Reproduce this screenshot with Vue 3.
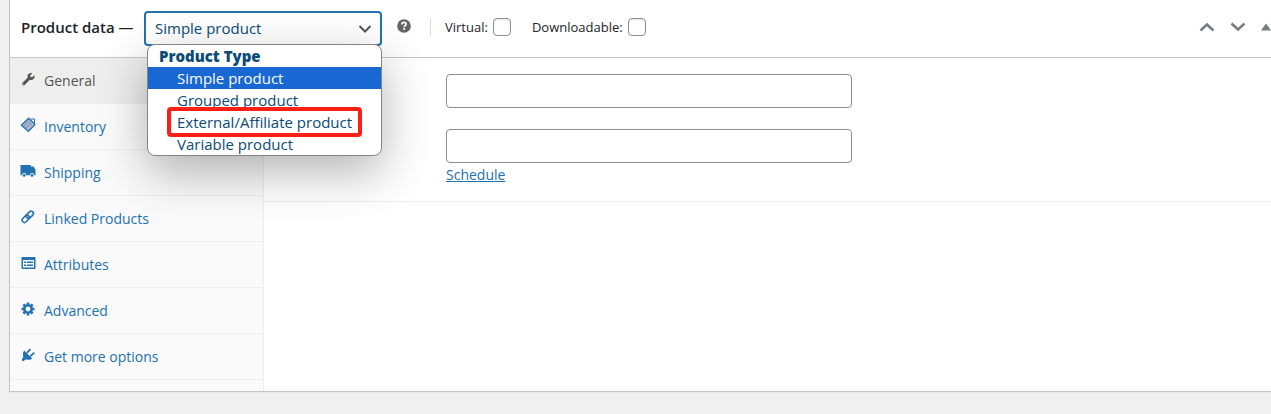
<template>
  <div class="page">
    <section class="product-data">
      <header class="panel-header">
        <label class="title" for="product-type">Product data —</label>
        <div class="type-picker">
          <select id="product-type" v-model="productType" class="type-select">
            <option v-for="type in productTypes" :key="type" :value="type">{{ type }}</option>
          </select>
          <svg class="select-arrow" viewBox="0 0 14 8" aria-hidden="true">
            <path d="M1.5 1 7 6.5 12.5 1" />
          </svg>
          <div class="type-menu">
            <div id="type-group" class="menu-label">Product Type</div>
            <ul role="listbox" aria-labelledby="type-group">
              <li
                v-for="type in productTypes"
                :key="type"
                role="option"
                :aria-selected="type === productType"
                :class="['menu-option', { selected: type === productType, marked: type === markedType }]"
                @click="productType = type"
              >
                {{ type }}
              </li>
            </ul>
          </div>
        </div>
        <button type="button" class="help" aria-label="Help">
          <svg viewBox="0 0 14 14">
            <circle cx="7" cy="7" r="6.8" fill="#646464" />
            <path d="M5 5.4C5 4.1 5.8 3.4 7 3.4s2.1.7 2.1 1.8C9.1 6.6 7.2 6.7 7.2 8.3" fill="none" stroke="#fff" stroke-width="1.7" />
            <rect x="6.2" y="9.2" width="1.9" height="1.7" fill="#fff" />
          </svg>
        </button>
        <div class="flags">
          <label class="flag">Virtual: <input v-model="isVirtual" type="checkbox" /></label>
          <label class="flag">Downloadable: <input v-model="isDownloadable" type="checkbox" /></label>
        </div>
        <div class="handles">
          <button type="button" aria-label="Move up">
            <svg class="chevron" viewBox="0 0 16 10"><path d="m1.5 8.5 6.5-6 6.5 6" /></svg>
          </button>
          <button type="button" aria-label="Move down">
            <svg class="chevron" viewBox="0 0 16 10"><path d="m1.5 1.5 6.5 6 6.5-6" /></svg>
          </button>
          <button type="button" aria-label="Toggle panel">
            <svg class="toggle" viewBox="0 0 10 10"><path d="M0 8.5 5 1.5l5 7z" /></svg>
          </button>
        </div>
      </header>

      <div class="panel-body">
        <nav class="tabs">
          <a
            v-for="tab in tabs"
            :key="tab.label"
            href="#"
            :class="['tab', { active: tab.label === activeTab }]"
            @click.prevent="activeTab = tab.label"
          >
            <svg class="tab-icon" viewBox="0 0 16 16" aria-hidden="true">
              <g v-if="tab.icon === 'wrench'" transform="translate(2 2) scale(.0245)">
                <path d="M507.7 109.1c-2.2-9-13.5-12.1-20.1-5.5l-74.4 74.4-67.8-11.4-11.3-67.8 74.3-74.4c6.6-6.6 3.4-17.9-5.7-20.2-47.3-11.7-99.5.9-136.5 38-39.7 39.6-50.6 97-34.1 147.2L18.7 402.8a64 64 0 0 0 90.5 90.5l213.2-213.2c50.1 16.7 107.5 5.7 147.4-34.2 37-37.1 49.7-89.4 37.9-136.8zM64 472a24 24 0 1 1 0-48 24 24 0 0 1 0 48z" />
              </g>
              <g v-else-if="tab.icon === 'tag'">
                <path d="M8.6 1.2 15 7.6l-6.6 6.8-7-6.2z" fill="#a9b6cf" stroke="currentColor" stroke-width="1.3" />
                <path d="m4 8 4.2 4M5.800 6.200l4.200 4M7.600 4.400l4.200 4" fill="none" stroke="currentColor" stroke-width=".7" />
                <path d="m4.8 10 5.6-5.7M7 12l5.6-5.7" fill="none" stroke="#e5b3b3" stroke-width=".7" />
                <path d="M10.5 2h4v4" fill="none" stroke="currentColor" stroke-width="1" />
              </g>
              <g v-else-if="tab.icon === 'truck'">
                <path d="M.5 2h10.3v1.4h2.7l2 3.4v5.400h-1.400a2.100 2.100 0 0 0-4.200 0H6.300a2.100 2.100 0 0 0-4.200 0H.5z" />
                <circle cx="4.2" cy="12.4" r="1.4" />
                <circle cx="12" cy="12.4" r="1.4" />
              </g>
              <g v-else-if="tab.icon === 'link'" fill="none" stroke="currentColor" stroke-width="1.6" transform="rotate(-45 8 8)">
                <rect x="1" y="5.4" width="8.2" height="4.6" rx="2.3" />
                <rect x="6.8" y="5.4" width="8.2" height="4.6" rx="2.3" />
              </g>
              <g v-else-if="tab.icon === 'list'">
                <path fill-rule="evenodd" d="M2.500 2h12a1 1 0 0 1 1 1v10a1 1 0 0 1-1 1h-12a1 1 0 0 1-1-1V3a1 1 0 0 1 1-1zM3 5v7.500h11V5z" />
                <path d="M4 6.500h2V8H4zM7 6.500h6V8H7zM4 9.500h2V11H4zM7 9.500h6V11H7z" />
              </g>
              <g v-else-if="tab.icon === 'gear'" fill="none" stroke="currentColor">
                <circle cx="8" cy="8" r="3.7" stroke-width="2.6" />
                <path stroke-width="2.6" d="M8 1.500v2M8 12.500v2M1.500 8h2M12.500 8h2M3.400 3.400l1.400 1.400M11.200 11.200l1.400 1.400M12.600 3.400l-1.400 1.400M4.800 11.200l-1.400 1.400" />
              </g>
              <g v-else>
                <path d="M4.200 3.600 12.200 11.400c-2 1.600-4.400 1.800-6.200.9L3.600 14 2 13.800V12l1.400-2.200C2.600 7.800 2.800 5.400 4.200 3.600z" />
                <path d="m7.400 5.400 2.600-2.700M10.800 8.800l2.900-2.600" fill="none" stroke="currentColor" stroke-width="1.8" stroke-linecap="round" />
              </g>
            </svg>
            <span>{{ tab.label }}</span>
          </a>
        </nav>

        <div class="options">
          <div class="option-group">
            <input v-model="regularPrice" class="price" type="text" aria-label="Regular price" />
            <div class="sale">
              <input v-model="salePrice" class="price" type="text" aria-label="Sale price" />
              <a href="#" class="schedule" @click.prevent>Schedule</a>
            </div>
          </div>
        </div>
      </div>
    </section>
  </div>
</template>

<script setup>
import { ref } from "vue"

const productTypes = ["Simple product", "Grouped product", "External/Affiliate product", "Variable product"]
const markedType = "External/Affiliate product"

const tabs = [
  { label: "General", icon: "wrench" },
  { label: "Inventory", icon: "tag" },
  { label: "Shipping", icon: "truck" },
  { label: "Linked Products", icon: "link" },
  { label: "Attributes", icon: "list" },
  { label: "Advanced", icon: "gear" },
  { label: "Get more options", icon: "plug" }
]

const productType = ref("Simple product")
const activeTab = ref("General")
const isVirtual = ref(false)
const isDownloadable = ref(false)
const regularPrice = ref("")
const salePrice = ref("")
</script>

<style>
body {
  background: #f0f0f0;
}
</style>

<style scoped>
* {
  box-sizing: border-box;
}

.page {
  padding: 0 0 22px 9px;
  font: 14px/22px "Open Sans", "Noto Sans", sans-serif;
  color: #1d2327;
}

button {
  display: flex;
  padding: 0;
  border: 0;
  background: none;
  cursor: pointer;
}

.product-data {
  background: #fff;
  border: solid #c3c4c7;
  border-width: 0 0 1px 1px;
  box-shadow: 0 1px 1px rgba(0, 0, 0, 0.04);
}

.panel-header {
  display: flex;
  align-items: center;
  height: 58px;
  padding: 0 0 4px 11px;
  border-bottom: 1px solid #c3c4c7;
}

.title {
  width: 123px;
  font-size: 15px;
  font-weight: 600;
  white-space: nowrap;
}

.type-picker {
  position: relative;
  width: 238px;
  padding-top: 3px;
}

.type-select {
  display: block;
  appearance: none;
  width: 100%;
  height: 35px;
  padding: 0 30px 0 9px;
  border: 2px solid #2271b1;
  border-radius: 4px;
  background: #fff;
  color: #0a4b78;
  font: inherit;
  font-size: 15px;
}

.select-arrow {
  position: absolute;
  top: 17px;
  right: 10px;
  width: 14px;
  height: 8px;
  fill: none;
  stroke: #50575e;
  stroke-width: 2;
  pointer-events: none;
}

.type-menu {
  position: absolute;
  z-index: 2;
  top: 36px;
  left: 3px;
  width: 235px;
  border: 1px solid #858585;
  border-radius: 8px;
  background: #fff;
  color: #0a4b78;
  font-size: 15px;
  box-shadow: 0 16px 48px rgba(0, 0, 0, 0.3);
}

.menu-label {
  padding-left: 11px;
  font-weight: 800;
}

.type-menu ul {
  margin: 0;
  padding: 0;
  list-style: none;
}

.menu-option {
  position: relative;
  padding-left: 29px;
  cursor: default;
}

.menu-option.selected {
  background: #1967d2;
  color: #fff;
}

.menu-option.marked::after {
  content: "";
  position: absolute;
  inset: -4px 19px -4px 19px;
  border: 4px solid #ff2015;
  border-radius: 4px;
}

.help {
  margin: 0 19px 2px 15px;
}

.help svg {
  width: 14px;
  height: 14px;
}

.flags {
  display: flex;
  gap: 21px;
  padding-left: 14px;
  border-left: 1px solid #dcdcde;
  font-size: 13px;
  font-weight: 500;
  line-height: 18px;
}

.flag {
  display: flex;
  align-items: center;
  gap: 5px;
  white-space: nowrap;
}

.flag input {
  appearance: none;
  width: 18px;
  height: 18px;
  margin: 0;
  border: 1px solid #8c8f94;
  border-radius: 4px;
  background: #fff;
  box-shadow: inset 0 1px 2px rgba(0, 0, 0, 0.1);
}

.handles {
  display: flex;
  align-items: center;
  gap: 15px;
  margin-left: auto;
}

.handles svg {
  fill: #787c82;
}

.handles .chevron {
  width: 16px;
  height: 10px;
  fill: none;
  stroke: #787c82;
  stroke-width: 2.5;
}

.handles .toggle {
  width: 10px;
  height: 10px;
}

.panel-body {
  display: flex;
}

.tabs {
  width: 254px;
  flex: none;
  padding-bottom: 11px;
  border-right: 1px solid #eee;
  background: #fafafa;
}

.tab {
  display: flex;
  align-items: center;
  gap: 8px;
  height: 46px;
  padding-left: 10px;
  border-bottom: 1px solid #eee;
  color: #2271b1;
  text-decoration: none;
}

.tab.active {
  background: #eee;
  color: #555;
}

.tab-icon {
  width: 16px;
  height: 16px;
  margin-bottom: 4px;
  fill: currentColor;
}

.options {
  flex: 1;
}

.option-group {
  display: flex;
  flex-direction: column;
  gap: 21px;
  padding: 16px 16px 15px 182px;
  border-bottom: 1px solid #eee;
}

.price {
  display: block;
  width: 100%;
  max-width: 406px;
  height: 34px;
  padding: 0 8px;
  border: 1px solid #8c8f94;
  border-radius: 4px;
  background: #fff;
  font: inherit;
}

.sale .price {
  margin-bottom: 1px;
}

.schedule {
  color: #2271b1;
}
</style>
